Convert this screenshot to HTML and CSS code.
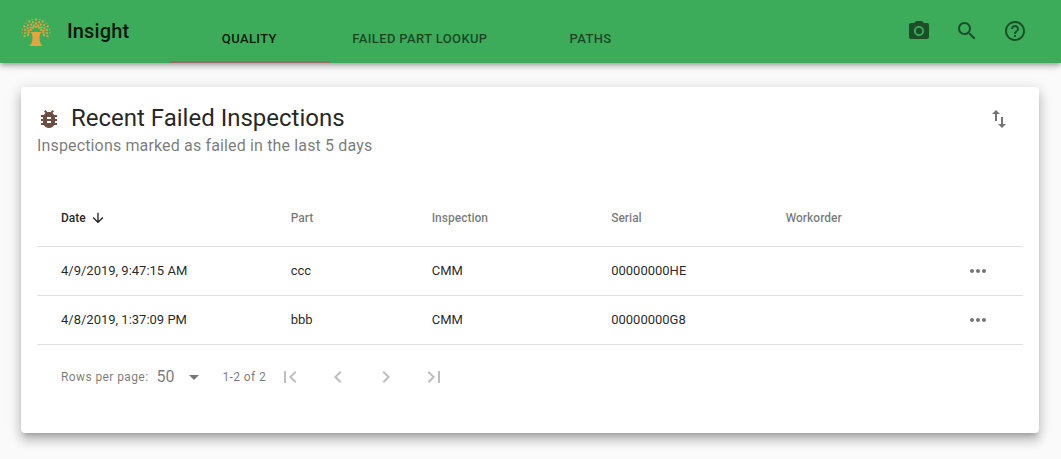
FILE: index.html
```
<!DOCTYPE html>
<html lang="en">
<head>
<meta charset="utf-8">
<meta name="viewport" content="width=device-width, initial-scale=1">
<title>Insight</title>
<link rel="stylesheet" href="styles.css">
</head>
<body>
<header class="app-bar">
  <svg class="logo" viewBox="0 0 30 30" aria-hidden="true">
    <path class="trunk" d="M9.500 15h11c-1.300 1.200-2 3-2 5.500 0 3.800 1 6.500 3 8.500H8.500c2-2 3-4.700 3-8.500 0-2.500-.7-4.300-2-5.500z"/>
    <path class="leaves" d="M15 11V1.500M16.700 9.700L18.800 2M13.300 9.700L11.200 2M17.500 11.700L22.200 3.400M12.500 11.700L7.800 3.400M19.600 11.400L25.200 5.800M10.400 11.400L4.800 5.800M19.300 13.500L27.600 8.800M10.700 13.500L2.400 8.800M21.300 14.300L29 12.200M8.700 14.300L1 12.200M21.200 16H29.200M8.800 16H.8M21.800 17.800L28.800 19.700M8.200 17.800L1.200 19.700"/>
  </svg>
  <h1 class="brand">Insight</h1>
  <nav class="tabs" aria-label="Sections">
    <a class="tab tab-active" href="#quality" aria-current="page">Quality</a>
    <a class="tab" href="#lookup">Failed Part Lookup</a>
    <a class="tab" href="#paths">Paths</a>
  </nav>
  <div class="actions">
    <button class="icon-button" type="button" aria-label="Scan barcode"><svg class="icon" viewBox="0 0 24 24"><circle cx="12" cy="12" r="3.200"/><path d="M9 2L7.170 4H4c-1.100 0-2 .9-2 2v12c0 1.100.9 2 2 2h16c1.100 0 2-.9 2-2V6c0-1.100-.9-2-2-2h-3.170L15 2H9zm3 15c-2.760 0-5-2.240-5-5s2.240-5 5-5 5 2.240 5 5-2.240 5-5 5z"/></svg></button>
    <button class="icon-button" type="button" aria-label="Search"><svg class="icon" viewBox="0 0 24 24"><path d="M15.500 14h-.79l-.28-.27C15.410 12.590 16 11.110 16 9.500 16 5.910 13.090 3 9.500 3S3 5.910 3 9.500 5.910 16 9.500 16c1.610 0 3.090-.59 4.230-1.570l.27.28v.79l5 4.990L20.490 19l-4.990-5zm-6 0C7.010 14 5 11.990 5 9.500S7.010 5 9.500 5 14 7.010 14 9.500 11.990 14 9.500 14z"/></svg></button>
    <button class="icon-button" type="button" aria-label="Help"><svg class="icon" viewBox="0 0 24 24"><path d="M11 18h2v-2h-2v2zm1-16C6.480 2 2 6.480 2 12s4.480 10 10 10 10-4.480 10-10S17.520 2 12 2zm0 18c-4.410 0-8-3.590-8-8s3.590-8 8-8 8 3.590 8 8-3.590 8-8 8zm0-14c-2.210 0-4 1.790-4 4h2c0-1.100.9-2 2-2s2 .9 2 2c0 2-3 1.750-3 5h2c0-2.250 3-2.500 3-5 0-2.210-1.790-4-4-4z"/></svg></button>
  </div>
</header>
<main class="page">
  <section class="card">
    <div class="card-header">
      <div class="card-heading">
        <h2 class="title"><svg class="icon bug" viewBox="0 0 24 24" aria-hidden="true"><path d="M20 8h-2.810c-.45-.78-1.070-1.450-1.820-1.960L17 4.410 15.590 3l-2.170 2.170C12.960 5.060 12.490 5 12 5c-.49 0-.96.060-1.410.17L8.410 3 7 4.410l1.620 1.630C7.880 6.550 7.260 7.220 6.810 8H4v2h2.090c-.05.33-.09.66-.09 1v1H4v2h2v1c0 .34.040.67.090 1H4v2h2.810c1.040 1.790 2.970 3 5.190 3s4.150-1.210 5.190-3H20v-2h-2.090c.05-.33.090-.66.090-1v-1h2v-2h-2v-1c0-.34-.04-.67-.09-1H20V8zm-6 8h-4v-2h4v2zm0-4h-4v-2h4v2z"/></svg>Recent Failed Inspections</h2>
        <p class="subtitle">Inspections marked as failed in the last 5 days</p>
      </div>
      <button class="icon-button" type="button" aria-label="Import or export"><svg class="icon" viewBox="0 0 24 24"><path d="M9 3L5 6.990h3V14h2V6.990h3L9 3zm7 14.010V10h-2v7.010h-3L15 21l4-3.990h-3z"/></svg></button>
    </div>
    <table class="table">
      <colgroup><col class="col-date"><col class="col-part"><col class="col-inspection"><col class="col-serial"><col class="col-workorder"><col class="col-more"></colgroup>
      <thead>
        <tr>
          <th scope="col" aria-sort="descending"><button class="sort sort-active" type="button">Date<svg class="sort-arrow" viewBox="0 0 24 24" aria-hidden="true"><path d="M20 12l-1.410-1.410L13 16.170V4h-2v12.170l-5.580-5.590L4 12l8 8 8-8z"/></svg></button></th>
          <th scope="col"><button class="sort" type="button">Part</button></th>
          <th scope="col"><button class="sort" type="button">Inspection</button></th>
          <th scope="col"><button class="sort" type="button">Serial</button></th>
          <th scope="col"><button class="sort" type="button">Workorder</button></th>
          <td></td>
        </tr>
      </thead>
      <tbody>
        <tr>
          <td>4/9/2019, 9:47:15 AM</td><td>ccc</td><td>CMM</td><td>00000000HE</td><td></td>
          <td class="more-cell"><button class="more" type="button" aria-label="Details for 00000000HE"><svg class="icon" viewBox="0 0 24 24"><path d="M6 10c-1.100 0-2 .9-2 2s.9 2 2 2 2-.9 2-2-.9-2-2-2zm12 0c-1.100 0-2 .9-2 2s.9 2 2 2 2-.9 2-2-.9-2-2-2zm-6 0c-1.100 0-2 .9-2 2s.9 2 2 2 2-.9 2-2-.9-2-2-2z"/></svg></button></td>
        </tr>
        <tr>
          <td>4/8/2019, 1:37:09 PM</td><td>bbb</td><td>CMM</td><td>00000000G8</td><td></td>
          <td class="more-cell"><button class="more" type="button" aria-label="Details for 00000000G8"><svg class="icon" viewBox="0 0 24 24"><path d="M6 10c-1.100 0-2 .9-2 2s.9 2 2 2 2-.9 2-2-.9-2-2-2zm12 0c-1.100 0-2 .9-2 2s.9 2 2 2 2-.9 2-2-.9-2-2-2zm-6 0c-1.100 0-2 .9-2 2s.9 2 2 2 2-.9 2-2-.9-2-2-2z"/></svg></button></td>
        </tr>
      </tbody>
    </table>
    <div class="pagination">
      <label class="caption" for="rows">Rows per page:</label>
      <div class="select-wrap">
        <select class="select" id="rows"><option>10</option><option selected>50</option></select>
        <svg class="select-arrow" viewBox="0 0 24 24" aria-hidden="true"><path d="M7 10l5 5 5-5z"/></svg>
      </div>
      <span class="caption range">1-2 of 2</span>
      <div class="pager">
        <button class="icon-button" type="button" aria-label="First page" disabled><svg class="icon" viewBox="0 0 24 24"><path d="M18.410 16.590L13.820 12l4.590-4.590L17 6l-6 6 6 6zM6 6h2v12H6z"/></svg></button>
        <button class="icon-button" type="button" aria-label="Previous page" disabled><svg class="icon" viewBox="0 0 24 24"><path d="M15.410 7.410L14 6l-6 6 6 6 1.410-1.410L10.830 12z"/></svg></button>
        <button class="icon-button" type="button" aria-label="Next page" disabled><svg class="icon" viewBox="0 0 24 24"><path d="M10 6L8.590 7.410 13.170 12l-4.580 4.590L10 18l6-6z"/></svg></button>
        <button class="icon-button" type="button" aria-label="Last page" disabled><svg class="icon" viewBox="0 0 24 24"><path d="M5.590 7.410L10.180 12l-4.590 4.590L7 18l6-6-6-6zM16 6h2v12h-2z"/></svg></button>
      </div>
    </div>
  </section>
</main>
</body>
</html>
```
FILE: styles.css
```
* {
  box-sizing: border-box;
}

body {
  margin: 0;
  background: #fafafa;
  color: rgba(0, 0, 0, 0.87);
  font-family: Roboto, "Liberation Sans", sans-serif;
}

button,
select {
  margin: 0;
  padding: 0;
  border: 0;
  background: none;
  color: inherit;
  font: inherit;
}

.icon {
  display: block;
  flex: none;
  width: 24px;
  height: 24px;
  fill: currentColor;
}

.icon-button {
  flex: none;
  padding: 12px;
  border-radius: 50%;
  color: rgba(0, 0, 0, 0.54);
}

.icon-button:disabled {
  color: rgba(0, 0, 0, 0.26);
}

.app-bar {
  position: relative;
  display: flex;
  align-items: center;
  height: 63px;
  padding: 0 22px 0 21px;
  background: #3cab5a;
  box-shadow: 0 2px 4px -1px rgba(0, 0, 0, 0.2), 0 4px 5px 0 rgba(0, 0, 0, 0.14), 0 1px 10px 0 rgba(0, 0, 0, 0.12);
}

.logo {
  flex: none;
  width: 30px;
  height: 30px;
}

.trunk {
  fill: #e8a33d;
}

.leaves {
  fill: none;
  stroke: #e8a33d;
  stroke-width: 1.7;
  stroke-dasharray: 2.2 1.4;
}

.brand {
  margin: 0 41px 0 16px;
  padding-bottom: 2px;
  font-size: 20px;
  font-weight: 500;
  line-height: 32px;
  letter-spacing: 0.0075em;
}

.tabs {
  display: flex;
  align-self: flex-end;
}

.tab {
  display: flex;
  align-items: center;
  justify-content: center;
  min-width: 160px;
  height: 48px;
  padding: 0 24px 2px 22px;
  color: rgba(0, 0, 0, 0.6);
  font-size: 13px;
  font-weight: 500;
  letter-spacing: 0.02857em;
  text-decoration: none;
  text-transform: uppercase;
  white-space: nowrap;
}

.tab-active {
  color: rgba(0, 0, 0, 0.87);
  box-shadow: inset 0 -2px #966f61;
}

.actions {
  display: flex;
  margin-left: auto;
  padding-bottom: 2px;
}

.page {
  padding: 24px 22px 24px 21px;
}

.card {
  padding: 16px 16px 24px;
  border-radius: 4px;
  background: #fff;
  box-shadow: 0 5px 5px -3px rgba(0, 0, 0, 0.2), 0 8px 10px 1px rgba(0, 0, 0, 0.14), 0 3px 14px 2px rgba(0, 0, 0, 0.12);
}

.card-header {
  display: flex;
  align-items: flex-start;
  justify-content: space-between;
  margin-bottom: 32px;
}

.card-header .icon-button {
  margin: -8px 0;
}

.title {
  display: flex;
  align-items: center;
  gap: 10px;
  margin: 0;
  font-size: 24px;
  font-weight: 400;
  line-height: 31px;
}

.bug {
  color: #6d4c41;
}

.subtitle {
  margin: 0;
  color: rgba(0, 0, 0, 0.54);
  font-size: 16px;
  line-height: 24px;
  letter-spacing: 0.00938em;
}

.table {
  width: 100%;
  border-collapse: separate;
  border-spacing: 0;
  table-layout: fixed;
  font-size: 13px;
}

.col-date {
  width: 23.3%;
}

.col-part {
  width: 14.3%;
}

.col-inspection {
  width: 18.2%;
}

.col-serial {
  width: 17.7%;
}

.col-workorder {
  width: 14%;
}

.table th,
.table td {
  height: 49px;
  padding: 0 0 2px 24px;
  border-bottom: 1px solid #e0e0e0;
  text-align: left;
  white-space: nowrap;
}

.table thead th,
.table thead td {
  height: 57px;
  padding-bottom: 1px;
}

.table .more-cell {
  padding-right: 24px;
  padding-bottom: 0;
  text-align: right;
}

.sort {
  display: inline-flex;
  align-items: center;
  gap: 4px;
  height: 16px;
  color: rgba(0, 0, 0, 0.54);
  font-size: 12px;
  font-weight: 500;
  vertical-align: middle;
}

.sort-active {
  color: rgba(0, 0, 0, 0.87);
}

.sort-arrow {
  width: 16px;
  height: 16px;
  fill: currentColor;
}

.more {
  display: inline-flex;
  justify-content: center;
  width: 42px;
  vertical-align: middle;
  color: rgba(0, 0, 0, 0.54);
}

.pagination {
  display: flex;
  align-items: center;
  min-height: 64px;
  padding-left: 24px;
  color: rgba(0, 0, 0, 0.54);
}

.caption {
  font-size: 12px;
  line-height: 20px;
  letter-spacing: 0.03333em;
}

.select-wrap {
  display: grid;
  align-items: center;
  width: 50px;
  margin: 0 16px 0 8px;
}

.select,
.select-arrow {
  grid-area: 1 / 1;
}

.select {
  width: 100%;
  height: 32px;
  padding-bottom: 1px;
  appearance: none;
  font-size: 16px;
}

.select-arrow {
  justify-self: end;
  width: 24px;
  height: 24px;
  fill: currentColor;
  pointer-events: none;
}

.pager {
  display: flex;
}
```
